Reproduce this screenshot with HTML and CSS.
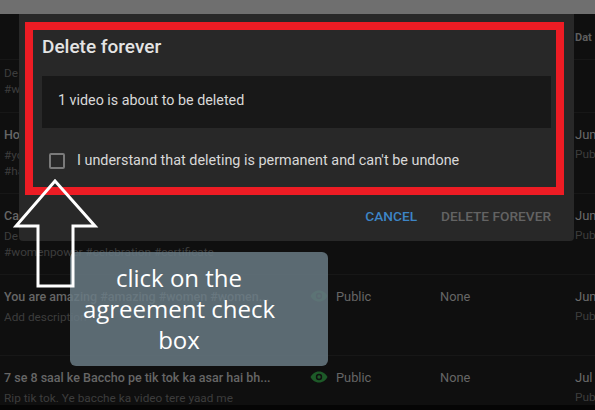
FILE: index.html
```html
<!DOCTYPE html>
<html lang="en">
<head>
    <meta charset="UTF-8">
    <meta name="viewport" content="width=device-width, initial-scale=1.0">
    <title>Delete forever</title>
    <link rel="stylesheet" href="styles.css">
</head>
<body>
    <div class="topbar"></div>

    <div class="table">
        <div class="row row-head">
            <div></div><div></div><div></div><div></div>
            <div class="date-head">Dat</div>
        </div>
        <div class="row row-first">
            <div class="video">
                <div class="muted">De</div>
                <div class="muted">#w</div>
            </div>
        </div>
        <div class="row row-tall">
            <div class="video">
                <div class="title">Ho</div>
                <div class="muted gap">#yo</div>
                <div class="muted">#ha</div>
            </div>
            <div></div><div></div><div></div>
            <div class="date"><div class="date-main">Jun</div><div class="muted gap-small">Pub</div></div>
        </div>
        <div class="row row-tall">
            <div class="video">
                <div class="title">Ca</div>
                <div class="muted gap">De</div>
                <div class="muted">#womenpower #celebration #certificate</div>
            </div>
            <div></div><div></div><div></div>
            <div class="date"><div class="date-main">Jun</div><div class="muted gap-small">Pub</div></div>
        </div>
        <div class="row row-tall">
            <div class="video">
                <div class="title">You are amazing #amazing #women #women...</div>
                <div class="muted gap">Add description</div>
            </div>
            <div class="eye faded">
                <svg width="18" height="14" viewBox="0 0 18 14"><path d="M9 1.500C5 1.500 2 4 .5 7 2 10 5 12.500 9 12.500S16 10 17.500 7C16 4 13 1.500 9 1.500Z" fill="#1d5a28"/><circle cx="9" cy="7" r="3.200" fill="#101010"/><circle cx="9" cy="7" r="1.700" fill="#1d5a28"/></svg>
            </div>
            <div class="cell">Public</div>
            <div class="cell">None</div>
            <div class="date"><div class="date-main">Jun</div><div class="muted gap-small">Pub</div></div>
        </div>
        <div class="row row-last">
            <div class="video">
                <div class="title">7 se 8 saal ke Baccho pe tik tok ka asar hai bh...</div>
                <div class="muted gap">Rip tik tok. Ye bacche ka video tere yaad me</div>
            </div>
            <div class="eye">
                <svg width="18" height="14" viewBox="0 0 18 14"><path d="M9 1.500C5 1.500 2 4 .5 7 2 10 5 12.500 9 12.500S16 10 17.500 7C16 4 13 1.500 9 1.500Z" fill="#1d5a28"/><circle cx="9" cy="7" r="3.200" fill="#101010"/><circle cx="9" cy="7" r="1.700" fill="#1d5a28"/></svg>
            </div>
            <div class="cell">Public</div>
            <div class="cell">None</div>
            <div class="date"><div class="date-main">Jul</div><div class="muted gap-small">Pub</div></div>
        </div>
    </div>

    <div class="dialog">
        <h2 class="dialog-title">Delete forever</h2>
        <div class="notice">1 video is about to be deleted</div>
        <label class="agree">
            <span class="checkbox"></span>
            <span>I understand that deleting is permanent and can't be undone</span>
        </label>
        <div class="actions">
            <span class="btn-cancel">CANCEL</span>
            <span class="btn-delete">DELETE FOREVER</span>
        </div>
    </div>

    <div class="red-frame"></div>

    <div class="callout">click on the<br>agreement check<br>box</div>

    <svg class="arrow" width="100" height="120" viewBox="0 0 100 120">
        <path d="M42 2 L82 47 H60 V107 H25 V47 H3 Z" fill="none" stroke="#fff" stroke-width="3"/>
    </svg>
</body>
</html>
```

FILE: styles.css
```css
* {
    box-sizing: border-box;
}

body {
    margin: 0;
    width: 595px;
    height: 410px;
    overflow: hidden;
    position: relative;
    background-color: #050505;
    font-family: Roboto, "Liberation Sans", sans-serif;
    color: #666;
}

.topbar {
    height: 14px;
    background-color: #6f6f6f;
}

.table {
    background-color: #0f0f0f;
}

.row {
    display: grid;
    grid-template-columns: 307px 25px 104px 135px 1fr;
    padding-left: 4px;
    border-bottom: 1px solid #171717;
    white-space: nowrap;
}

.row-head {
    height: 46px;
    padding-top: 17px;
}

.row-first {
    height: 53px;
    padding-top: 5px;
}

.row-tall {
    height: 81px;
    padding-top: 14px;
}

.row-last {
    height: 49px;
    padding-top: 14px;
    border-bottom: none;
}

.video {
    overflow: hidden;
    line-height: 16px;
}

.title {
    font-weight: 500;
    color: #666;
    font-size: 12.500px;
}

.muted {
    color: #3d3d3d;
    font-size: 11.800px;
}

.gap {
    margin-top: 4px;
}

.gap-small {
    margin-top: 3px;
}

.eye {
    margin-left: -1px;
    line-height: 0;
}

.eye.faded {
    opacity: 0.85;
}

.cell {
    color: #666;
    line-height: 16px;
    font-size: 12.800px;
}

.date {
    line-height: 16px;
}

.date-head {
    font-size: 11px;
    font-weight: 700;
    color: #5e5e5e;
}

.date-main {
    color: #6a6a6a;
    font-size: 13px;
}

.dialog {
    position: absolute;
    left: 19px;
    top: 14px;
    width: 555px;
    height: 227px;
    padding: 23px 23px 0;
    background-color: #282828;
    border-radius: 0 0 4px 4px;
}

.dialog-title {
    margin: 0;
    font-size: 19px;
    line-height: 20px;
    font-weight: 500;
    color: #e4e4e4;
}

.notice {
    margin-top: 19px;
    height: 52px;
    padding: 0 0 4px 16px;
    display: flex;
    align-items: center;
    background-color: #181818;
    font-size: 14.300px;
    color: #d8d8d8;
}

.agree {
    display: flex;
    align-items: center;
    margin-top: 24px;
    padding-left: 7px;
    font-size: 14.400px;
    color: #d8d8d8;
    gap: 12px;
}

.checkbox {
    width: 16px;
    height: 16px;
    border: 2px solid #7a7a7a;
    border-radius: 2px;
}

.actions {
    display: flex;
    justify-content: flex-end;
    gap: 24px;
    margin-top: 39px;
    font-size: 13.700px;
    font-weight: 500;
}

.btn-cancel {
    color: #3d85c6;
}

.btn-delete {
    color: #636363;
}

/* annotations drawn on top of the screenshot */
.red-frame {
    position: absolute;
    left: 25px;
    top: 22px;
    width: 539px;
    height: 173px;
    border: 8px solid #ed1c24;
}

.callout {
    position: absolute;
    left: 70px;
    top: 252px;
    width: 258px;
    height: 114px;
    padding: 10px 40px 0 0;
    border-radius: 6px;
    background-color: rgba(105, 122, 132, 0.85);
    color: #fff;
    font-family: "Open Sans", sans-serif;
    font-size: 24px;
    line-height: 31px;
    text-align: center;
    white-space: nowrap;
}

.arrow {
    position: absolute;
    left: 13px;
    top: 179px;
}
```
